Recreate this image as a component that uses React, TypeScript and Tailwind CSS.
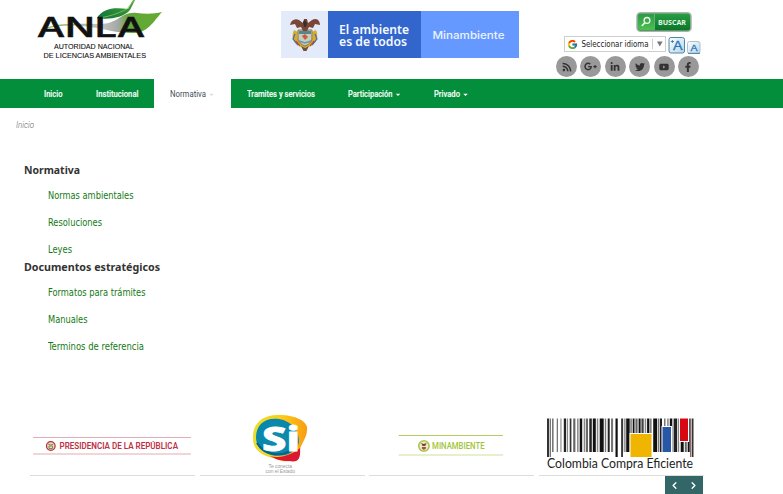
import React from "react";
import { FaRss, FaGooglePlusG, FaLinkedinIn, FaTwitter, FaYoutube, FaFacebookF } from "react-icons/fa";
import { FcGoogle } from "react-icons/fc";
import { ChevronLeft, ChevronRight } from "lucide-react";

const roboto = "font-['Roboto',sans-serif]";

function FitText({ x, y, w, size, children, fill = "#111", weight = 400, family = "Liberation Sans, sans-serif", stroke }: {
  x: number; y: number; w: number; size: number; children: string; fill?: string; weight?: number; family?: string; stroke?: number;
}) {
  return (
    <text x={x} y={y} textLength={w} lengthAdjust="spacingAndGlyphs" fontSize={size} fill={fill} fontWeight={weight} fontFamily={family} stroke={stroke ? fill : undefined} strokeWidth={stroke}>
      {children}
    </text>
  );
}

function AnlaLogo() {
  return (
    <svg width="130" height="62" viewBox="36 0 130 62" className="block">
      <defs>
        <linearGradient id="leaf" x1="0" x2="1">
          <stop offset="0" stopColor="#7dba4c" />
          <stop offset=".3" stopColor="#a5b893" />
          <stop offset=".5" stopColor="#c4c4c4" />
          <stop offset=".64" stopColor="#a5a8a2" />
          <stop offset=".72" stopColor="#62a83a" />
          <stop offset="1" stopColor="#64a92f" />
        </linearGradient>
        <linearGradient id="leaf2" x1="0" y1="1" x2="1" y2="0">
          <stop offset="0" stopColor="#0a743b" />
          <stop offset="1" stopColor="#4ea33a" />
        </linearGradient>
      </defs>
      <path d="M40 30C58 22 78 24 100 24C119 24 121 11 137 13C146 14 154 14 162 12C153 22 147 34 132 33C116 33 105 29 90 27C70 24 55 26 40 30Z" fill="url(#leaf)" />
      <path d="M97 18C103 8 114 7 128 9L133 0H135L130 10C123 18 108 20 97 18Z" fill="url(#leaf2)" />
      <path d="M97 18C108 17 117 14 127 9L134 0" stroke="#8ac650" strokeWidth=".8" fill="none" />
      <FitText x={37} y={36.5} w={108} size={27} weight={500} family="Inter, sans-serif" stroke={0.6}>ANLA</FitText>
      <FitText x={54} y={49} w={80} size={7.4} stroke={0.1}>AUTORIDAD NACIONAL</FitText>
      <FitText x={43.5} y={57.8} w={102.5} size={7.4} stroke={0.1}>DE LICENCIAS  AMBIENTALES</FitText>
    </svg>
  );
}

function Crest() {
  return (
    <svg width="32" height="36" viewBox="0 0 32 36">
      <path d="M5 13C1 22 6 29 15 31C25 30 31 23 27 13L23 15C25 22 21 27 16 27C10 27 7 22 9 15Z" fill="#d6ac28" />
      <path d="M6 17L4 22L9 28M26 17L28 22L23 28" stroke="#566b9b" strokeWidth="1.2" fill="none" />
      <path d="M7 24L11 29M25 24L21 29" stroke="#b84332" strokeWidth="1.2" />
      <path d="M9 13H23V21C23 25 19 28 16 29C13 28 9 25 9 21Z" fill="#c6cdba" stroke="#8b7040" />
      <path d="M10 14H22V17H10Z" fill="#55868a" />
      <path d="M13 19L16 17L19 20L16 23Z" fill="#c55c45" />
      <path d="M10 24L16 26L22 24" stroke="#6894b8" strokeWidth="1.5" fill="none" />
      <path d="M1 8C2 3 6 1 10 3L14 6L15 2H18L19 6L23 3C28 0 31 4 31 8L26 7L24 11L20 10L18 14H14L12 10L8 11L6 7Z" fill="#7a4636" />
      <path d="M14 5L16 3L18 6L17 10H15Z" fill="#3d2c28" />
      <path d="M12 29L16 31L20 29L17.5 34H14.5Z" fill="#735038" />
    </svg>
  );
}

function MinisterioBanner() {
  return (
    <div className="flex h-[47px] w-[238px]">
      <div className="flex w-[47px] items-center justify-center bg-[#e3ebfb]"><Crest /></div>
      <div className="w-[93px] bg-[#3366cc]">
        <svg width="93" height="47">
          <FitText x={11} y={23.3} w={70} size={12.2} weight={600} fill="#f5faff" family="Noto Sans, sans-serif">El ambiente</FitText>
          <FitText x={11} y={35} w={68} size={12.2} weight={600} fill="#f5faff" family="Noto Sans, sans-serif">es de todos</FitText>
        </svg>
      </div>
      <div className="w-[98px] bg-[#6699ff]">
        <svg width="98" height="47">
          <FitText x={11.5} y={27.7} w={72} size={11} weight={500} fill="#eaf2ff" family="Inter, sans-serif">Minambiente</FitText>
        </svg>
      </div>
    </div>
  );
}

function Tools() {
  const icons = [FaRss, FaGooglePlusG, FaLinkedinIn, FaTwitter, FaYoutube, FaFacebookF];
  return (
    <div className="ml-[37px] flex w-[146px] flex-col pt-3">
      <svg width="56" height="20" className="ml-[80px] block">
        <defs>
          <linearGradient id="buscar" x2="0" y2="1">
            <stop stopColor="#2ba046" /><stop offset=".5" stopColor="#168a36" /><stop offset="1" stopColor="#0a7428" />
          </linearGradient>
          <linearGradient id="lupa" x2="0" y2="1">
            <stop stopColor="#2c9a48" /><stop offset="1" stopColor="#4cc04e" />
          </linearGradient>
        </defs>
        <rect x="1" y=".8" width="54" height="18.4" rx="3.5" fill="url(#buscar)" stroke="#a9b5ab" strokeWidth="1.5" />
        <path d="M4 2H18V18H4Q2 18 2 16V4Q2 2 4 2Z" fill="url(#lupa)" />
        <path d="M18.5 2V18" stroke="#77b984" strokeWidth=".8" />
        <circle cx="11" cy="8.4" r="2.9" fill="none" stroke="#eef9ed" strokeWidth="1.3" />
        <path d="M9 10.7L5.8 14" stroke="#eef9ed" strokeWidth="1.7" />
        <FitText x={22} y={12.5} w={28} size={7} weight={700} fill="#e8f5e7" family="Open Sans, sans-serif">BUSCAR</FitText>
      </svg>
      <div className="mt-1 flex h-[19px] items-start pl-2">
        <div className="flex h-4 w-[102px] items-center border border-[#cfcfcf] bg-white">
          <FcGoogle className="ml-0.5 size-[11px] shrink-0" />
          <svg width="86" height="14">
            <FitText x={3.5} y={10} w={67} size={8.3} fill="#222" family="DejaVu Sans Condensed, DejaVu Sans, sans-serif">Seleccionar idioma</FitText>
            <path d="M74.5 2V12" stroke="#ccc" strokeWidth="1" />
            <path d="M79 4.5H84.6L81.8 9.5Z" fill="#777" />
          </svg>
        </div>
        <svg width="33" height="19" className="ml-0.5 block shrink-0">
          <defs>
            <linearGradient id="aa" x2="1" y2="1"><stop stopColor="#fff" /><stop offset="1" stopColor="#b8d5e8" /></linearGradient>
          </defs>
          <rect x="1" y="1.5" width="15.5" height="15.5" rx="2" fill="url(#aa)" stroke="#4e87a8" />
          <FitText x={5} y={14.3} w={9.5} size={12.5} fill="#2476b8" stroke={0.3}>A</FitText>
          <path d="M2.8 5.5H6M4.4 4V7" stroke="#2476a8" strokeWidth=".8" />
          <rect x="19.5" y="5.5" width="12.5" height="12" rx="2" fill="url(#aa)" stroke="#a8c2d0" />
          <path d="M20 17.3H32" stroke="#477c9e" strokeWidth="1" />
          <FitText x={22.4} y={15} w={7} size={9} fill="#2476b8" stroke={0.3}>A</FitText>
        </svg>
      </div>
      <div className="mt-px flex gap-[3.4px]">
        {icons.map((Icon, i) => (
          <div key={i} className="flex size-[21px] shrink-0 items-center justify-center rounded-full bg-[#999]">
            <Icon className={`text-[#333] ${i === 1 ? "size-[13px]" : "size-[10px]"}`} />
          </div>
        ))}
      </div>
    </div>
  );
}

const navItems = [
  { text: "Inicio", cell: "w-[70px] pl-[44px]", tw: 18.5 },
  { text: "Institucional", cell: "w-[84px] pl-[25.5px]", tw: 42.5 },
  { text: "Normativa", cell: "w-[77px] pl-[16px] bg-white h-[29px]", tw: 36, active: true, caret: true },
  { text: "Tramites y servicios", cell: "w-[101px] pl-[16px]", tw: 68 },
  { text: "Participación", cell: "w-[85px] pl-[16px]", tw: 44.5, caret: true },
  { text: "Privado", cell: "w-[70px] pl-[17px]", tw: 26, caret: true },
];

function Nav() {
  return (
    <nav className="flex h-[29px] bg-[#038e3c]">
      {navItems.map((n) => (
        <a key={n.text} className={`flex items-center ${n.cell}`}>
          <svg width={n.tw + 9} height="14" className="shrink-0">
            <FitText x={0} y={9.8} w={n.tw} size={8.5} weight={n.active ? 400 : 500} fill={n.active ? "#444e54" : "#f4fff7"} stroke={n.active ? undefined : 0.15} family="Roboto, sans-serif">{n.text}</FitText>
            {n.caret && <path d={`M${n.tw + 3.2} 6.7h4.6l-2.3 2.3z`} fill={n.active ? "#ddd" : "#fff"} />}
          </svg>
        </a>
      ))}
    </nav>
  );
}

function Section({ title, width, items }: { title: string; width: number; items: [string, number][] }) {
  return (
    <section>
      <h2>
        <svg width="180" height="18" className="block">
          <FitText x={0} y={13} w={width} size={11} weight={700} fill="#333" family="Noto Sans, sans-serif">{title}</FitText>
        </svg>
      </h2>
      <ul className="flex flex-col gap-[9px] pl-6 pt-[7px]">
        {items.map(([t, w]) => (
          <li key={t} className="h-[18px]">
            <svg width="140" height="18" className="block">
              <FitText x={0} y={12.7} w={w} size={9.7} fill="#137a13" family="DejaVu Sans Condensed, DejaVu Sans, sans-serif">{t}</FitText>
            </svg>
          </li>
        ))}
      </ul>
    </section>
  );
}

function Presidencia() {
  return (
    <svg width="165" height="66" viewBox="30 409 165 66" className="block">
      <path d="M33 437.5H191M33 454H191" stroke="#e0aeb4" strokeWidth="1.2" />
      <circle cx="50.8" cy="446" r="4.3" fill="#e7dfbd" stroke="#b32c3b" strokeWidth="1.2" />
      <path d="M48 444L50.8 445L53.5 444M49 446H52.5V448.5H49Z" stroke="#746a3c" strokeWidth=".8" fill="none" />
      <FitText x={59.5} y={449.3} w={118.5} size={9} weight={600} fill="#bd3044" family="Roboto, sans-serif">PRESIDENCIA DE LA REPÚBLICA</FitText>
    </svg>
  );
}

function SiLogo() {
  return (
    <svg width="165" height="66" viewBox="200 409 165 66" className="block">
      <defs>
        <linearGradient id="gold"><stop stopColor="#e7df32" /><stop offset=".5" stopColor="#fdce16" /><stop offset="1" stopColor="#f99c12" /></linearGradient>
        <radialGradient id="blue"><stop stopColor="#128ca9" /><stop offset="1" stopColor="#0786ad" /></radialGradient>
      </defs>
      <path d="M253 439C252 423 263 414 280 415C294 415 309 421 307 430C307 439 298 447 300 454C296 463 283 463 274 458C261 456 253 449 253 439Z" fill="url(#gold)" />
      <path d="M270 456C281 459 293 454 300 448C301 459 298 463 289 461C281 461 275 459 270 456Z" fill="#db1731" />
      <path d="M256 437C256 425 265 417 279 419C292 421 299 431 299 442C297 453 284 458 271 455C261 452 256 446 256 437Z" fill="url(#blue)" />
      <path d="M257 443C264 455 280 457 290 451" stroke="#075f8c" strokeWidth="2" fill="none" />
      <FitText x={262} y={451} w={38} size={33} weight={800} fill="#fff" family="Noto Sans, Open Sans, sans-serif" stroke={0.8}>Si</FitText>
      <FitText x={268.5} y={467.5} w={23.5} size={5} fill="#999">Te conecta</FitText>
      <FitText x={265.5} y={472.5} w={29.5} size={5} fill="#999">con el Estado</FitText>
    </svg>
  );
}

function Minambiente() {
  return (
    <svg width="165" height="66" viewBox="369.4 409 165 66" className="block">
      <path d="M399 435.5H503.5" stroke="#b4cc61" /><path d="M399 455H503.5" stroke="#dfeabb" strokeWidth="1.3" />
      <circle cx="424.3" cy="446" r="5.2" fill="#eee8d0" stroke="#aac94f" strokeWidth="1.6" />
      <path d="M421.5 443L424 444L427 443L425.5 446H423Z" fill="#71442d" />
      <path d="M422.3 447H426.3V448.5L424.3 450L422.3 448.5Z" fill="#b34d3d" />
      <FitText x={432.5} y={449.2} w={52.5} size={8.8} weight={500} fill="#a2c438" family="Roboto, sans-serif">MINAMBIENTE</FitText>
    </svg>
  );
}

const bars: [number, number, string, number][] = [
  [547, 2, "#333", 457], [549.6, 1.4, "#777", 457], [552, 1.6, "#777", 452], [556.7, 1.3, "#777", 452], [560.3, 1.3, "#999", 452],
  [563.8, 2.2, "#222", 452], [566.7, 1.4, "#888", 452], [569.7, 1.7, "#333", 452], [573.2, 2.2, "#666", 452], [577.2, 1.3, "#777", 452],
  [579.7, 2.5, "#111", 452], [583.7, 1.6, "#888", 452], [586.2, 1.6, "#444", 452], [589.3, 2.5, "#222", 452], [592.8, 3, "#111", 452],
  [596.8, 1.5, "#888", 452], [599.7, 4, "#111", 452], [604.8, 1.4, "#777", 452], [607.7, 2, "#222", 452], [611, 2.1, "#777", 452],
  [615.5, 2.2, "#111", 457], [621.2, 1.7, "#222", 457], [623.7, 2, "#999", 452], [626.2, 3.5, "#111", 452], [630.3, 1.5, "#777", 452],
  [632.7, 1.8, "#111", 452], [635.4, 2.2, "#666", 452], [638.6, 2, "#111", 452], [641.4, 2.3, "#444", 452], [644.7, 1.5, "#888", 452],
  [647.1, 2.3, "#111", 452], [650.1, 1.5, "#777", 452], [653.2, 4, "#111", 452], [658, 1.4, "#777", 452], [660, 2, "#222", 452],
  [664, 1.5, "#777", 452], [667, 1.8, "#999", 452], [669.8, 2.5, "#111", 452], [673.6, 3.5, "#222", 452], [677.8, 1.4, "#888", 452],
  [680.7, 3, "#111", 452], [684.8, 2, "#666", 452], [687.7, 2, "#111", 452], [690, 1.5, "#8a6864", 457], [692, 1.5, "#333", 457],
];

function Compra() {
  return (
    <svg width="165" height="66" viewBox="539 409 165 66" className="block">
      {bars.map(([x, w, c, b]) => <path key={x} d={`M${x} 418.5h${w}V${b}h-${w}Z`} fill={c} />)}
      <path d="M629.5 433H652.5V458H629.5ZM661.5 426H672V453H661.5ZM679 418H689V442H679Z" fill="#fff" />
      <path d="M630.5 434H651.5V457H630.5Z" fill="#efb500" />
      <path d="M662.5 427H671V452H662.5Z" fill="#2858a5" />
      <path d="M680 418.5H688V441H680Z" fill="#d80812" />
      <FitText x={547} y={468} w={146} size={12.8} fill="#222" family="Lato, sans-serif">Colombia Compra Eficiente</FitText>
    </svg>
  );
}

export default function App() {
  const logos = [Presidencia, SiLogo, Minambiente, Compra];
  return (
    <div className={`flex h-[494px] w-[783px] flex-col overflow-hidden bg-white ${roboto}`}>
      <header className="flex h-[79px] shrink-0 items-start pl-9">
        <AnlaLogo />
        <div className="ml-[115px] mt-[11px]"><MinisterioBanner /></div>
        <Tools />
      </header>
      <Nav />
      <div className="pl-4 pt-[9px]">
        <svg width="60" height="16" className="block">
          <text x="0" y="11" textLength="18" lengthAdjust="spacingAndGlyphs" fontSize="8.2" fontStyle="italic" fontWeight="300" fill="#666" fontFamily="Roboto, sans-serif">Inicio</text>
        </svg>
      </div>
      <main className="flex flex-col pl-6 pt-[28px]">
        <Section title="Normativa" width={56} items={[["Normas ambientales", 85.5], ["Resoluciones", 54], ["Leyes", 24]]} />
        <Section title="Documentos estratégicos" width={136} items={[["Formatos para trámites", 97.5], ["Manuales", 39.5], ["Terminos de referencia", 96]]} />
      </main>
      <footer className="mt-auto h-[85px] shrink-0 pl-[30px]">
        <div className="flex gap-[4.7px]">
          {logos.map((Logo, i) => (
            <div key={i} className="h-[67px] w-[165px] border-b border-[#ddd]"><Logo /></div>
          ))}
        </div>
        <div className="ml-[635px] flex h-[18px] w-[38px] items-center justify-around bg-[#336666] text-white">
          <ChevronLeft size={11} strokeWidth={3} />
          <ChevronRight size={11} strokeWidth={3} />
        </div>
      </footer>
    </div>
  );
}
